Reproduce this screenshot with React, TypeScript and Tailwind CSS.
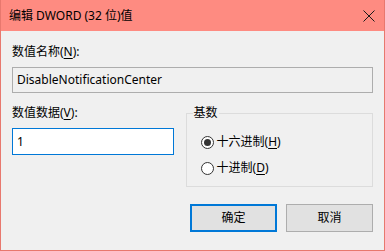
import React, { useState } from "react";

const font = { fontFamily: '"Noto Sans", "Noto Sans CJK SC", sans-serif' };

function Radio({ checked, label, hotkey, onSelect }: { checked: boolean; label: string; hotkey: string; onSelect: () => void }) {
  return (
    <label className="flex h-[16px] cursor-default items-center" onClick={onSelect}>
      <span className="flex h-[13px] w-[13px] items-center justify-center rounded-full border border-[#333333] bg-white">
        {checked && <span className="h-[7px] w-[7px] rounded-full bg-[#333333]" />}
      </span>
      <span className="ml-[3px] text-[12px] leading-[16px] text-black">
        {label}(<span className="underline underline-offset-2">{hotkey}</span>)
      </span>
    </label>
  );
}

export default function App() {
  const [hex, setHex] = useState(true);
  const [value, setValue] = useState("1");

  return (
    <div style={font} className="flex h-[251px] w-[385px] flex-col border-x border-b border-[#e8786e] bg-[#f0f0f0] text-black">
      {/* title bar */}
      <div className="flex h-[31px] shrink-0 items-center justify-between bg-[#fe8b81] pl-[8px] pr-[8px]">
        <span className="text-[12px] leading-[16px]">编辑 DWORD (32 位)值</span>
        <svg width="12" height="12" viewBox="0 0 12 12" className="mr-[1px]">
          <path d="M0.5 0.5 L11.5 11.5 M11.5 0.5 L0.5 11.5" stroke="#1a1a1a" strokeWidth="1" fill="none" />
        </svg>
      </div>

      <div className="flex flex-col px-[11px]">
        <div className="mt-[13px] text-[12px] leading-[16px]">
          数值名称(<span className="underline underline-offset-2">N</span>):
        </div>
        <div className="mt-[7px] flex h-[26px] items-center border border-[#adadad] bg-[#f0f0f0] px-[4px] text-[12px]">
          DisableNotificationCenter
        </div>

        <div className="mt-[12px] flex">
          <div className="flex w-[162px] flex-col">
            <div className="text-[12px] leading-[16px]">
              数值数据(<span className="underline underline-offset-2">V</span>):
            </div>
            <input
              value={value}
              onChange={(e) => setValue(e.target.value)}
              className="mt-[7px] h-[27px] w-full border border-[#0078d7] bg-white px-[4px] text-[12px] outline-none"
            />
          </div>

          <fieldset className="ml-[12px] h-[82px] w-[188px] border border-[#dcdcdc] px-[6px]">
            <legend className="px-[1px] text-[12px] leading-[16px]">基数</legend>
            <div className="ml-[8px] mt-[13px] flex flex-col gap-[10px]">
              <Radio checked={hex} label="十六进制" hotkey="H" onSelect={() => setHex(true)} />
              <Radio checked={!hex} label="十进制" hotkey="D" onSelect={() => setHex(false)} />
            </div>
          </fieldset>
        </div>

        <div className="mt-[17px] flex justify-end gap-[9px]">
          <button className="h-[28px] w-[87px] border-2 border-[#0078d7] bg-[#e1e1e1] text-[12px]">确定</button>
          <button className="h-[28px] w-[87px] border border-[#adadad] bg-[#e1e1e1] text-[12px]">取消</button>
        </div>
      </div>
    </div>
  );
}
